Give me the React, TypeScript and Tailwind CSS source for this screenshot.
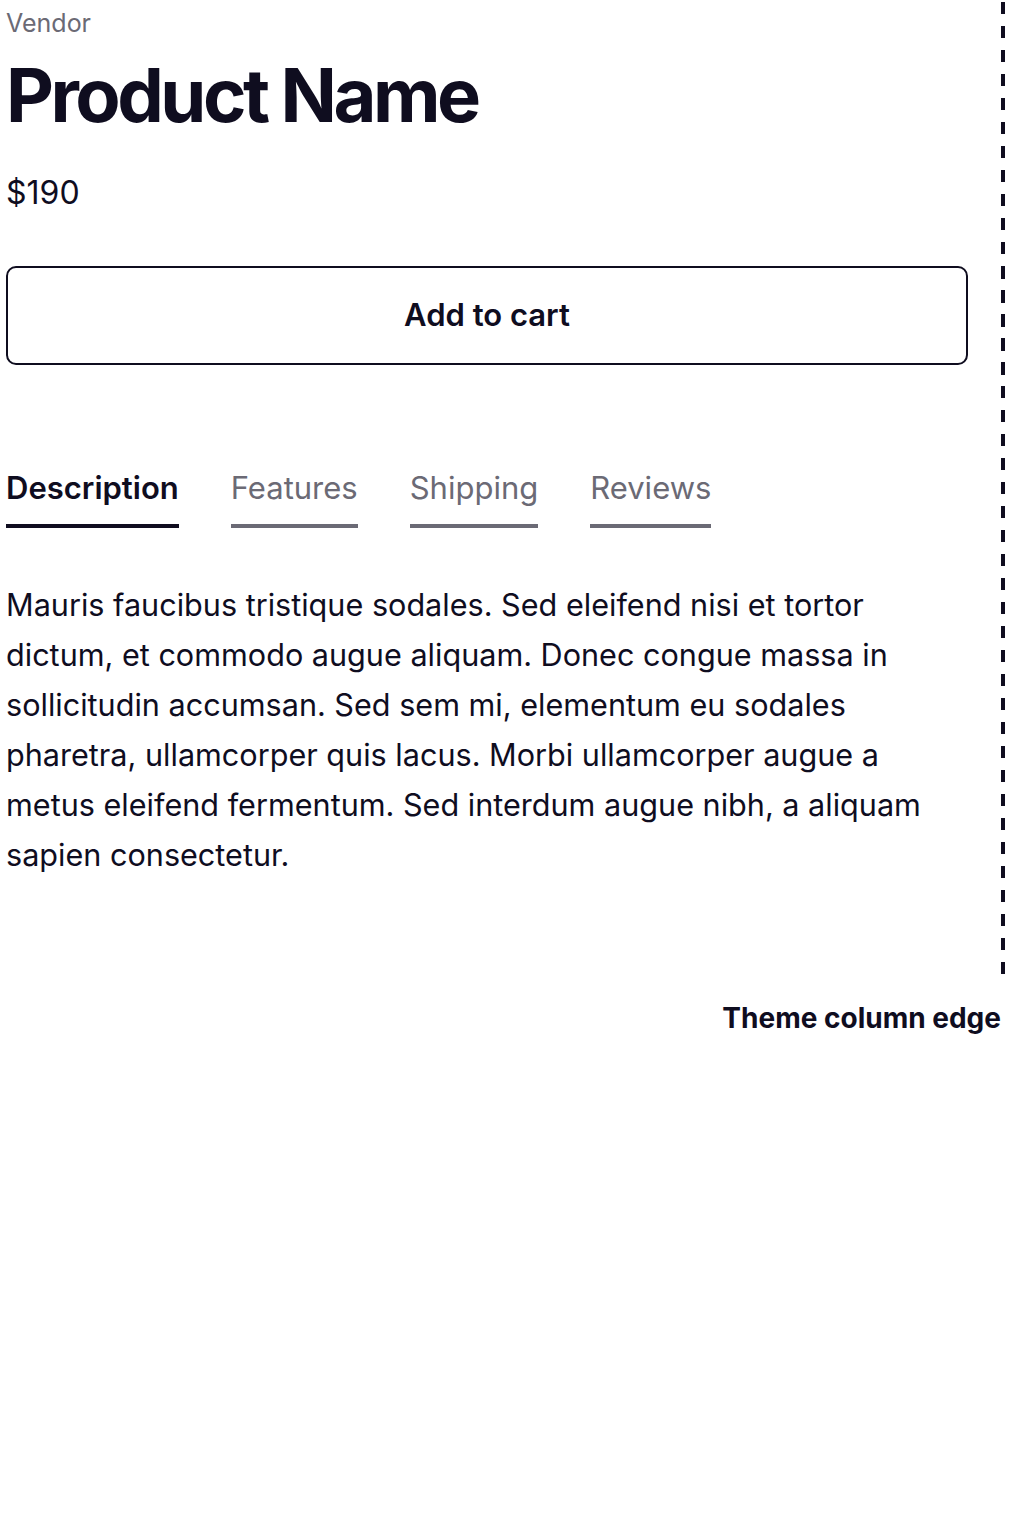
import { useState } from "react"

const tabs = ["Description", "Features", "Shipping", "Reviews"]

export default function App() {
  const [active, setActive] = useState("Description")

  return (
    <div className="min-h-screen bg-white font-['Inter',sans-serif] text-[#0f0d1f]">
      <div className="flex w-[1005px] h-[975px]">
        <div className="flex-1 pl-[6px] pr-[33px]">
          <p className="pt-[8px] text-[25px] leading-[30px] text-[#6b6a75]">Vendor</p>
          <h1 className="mt-[20px] text-[74px] leading-[74px] font-bold tracking-[-3.5px]">Product Name</h1>
          <p className="mt-[43px] text-[32px] leading-[36px]">$190</p>

          <button className="mt-[55px] w-full h-[99px] rounded-[10px] border-2 border-[#0f0d1f] text-[31px] font-semibold">
            Add to cart
          </button>

          <div className="mt-[103px] flex gap-[52px]">
            {tabs.map((tab) => (
              <button
                key={tab}
                onClick={() => setActive(tab)}
                className={`pb-[16px] border-b-4 text-[31px] leading-[40px] ${
                  active === tab
                    ? "border-[#0f0d1f] font-semibold text-[#0f0d1f]"
                    : "border-[#6b6a75] text-[#6b6a75]"
                }`}
              >
                {tab}
              </button>
            ))}
          </div>

          <p className="mt-[52px] max-w-[935px] text-[30.6px] leading-[50px]">
            Mauris faucibus tristique sodales. Sed eleifend nisi et tortor dictum, et commodo augue aliquam. Donec
            congue massa in sollicitudin accumsan. Sed sem mi, elementum eu sodales pharetra, ullamcorper quis lacus.
            Morbi ullamcorper augue a metus eleifend fermentum. Sed interdum augue nibh, a aliquam sapien consectetur.
          </p>
        </div>
        {/* dashed column edge */}
        <div className="w-[4px] h-full pt-[2px]">
          <div className="h-full bg-[repeating-linear-gradient(to_bottom,#0f0d1f_0_12.5px,transparent_12.5px_24px)]" />
        </div>
      </div>
      <p className="w-[1001px] mt-[27px] text-right text-[28px] leading-[32px] font-bold">Theme column edge</p>
    </div>
  )
}
